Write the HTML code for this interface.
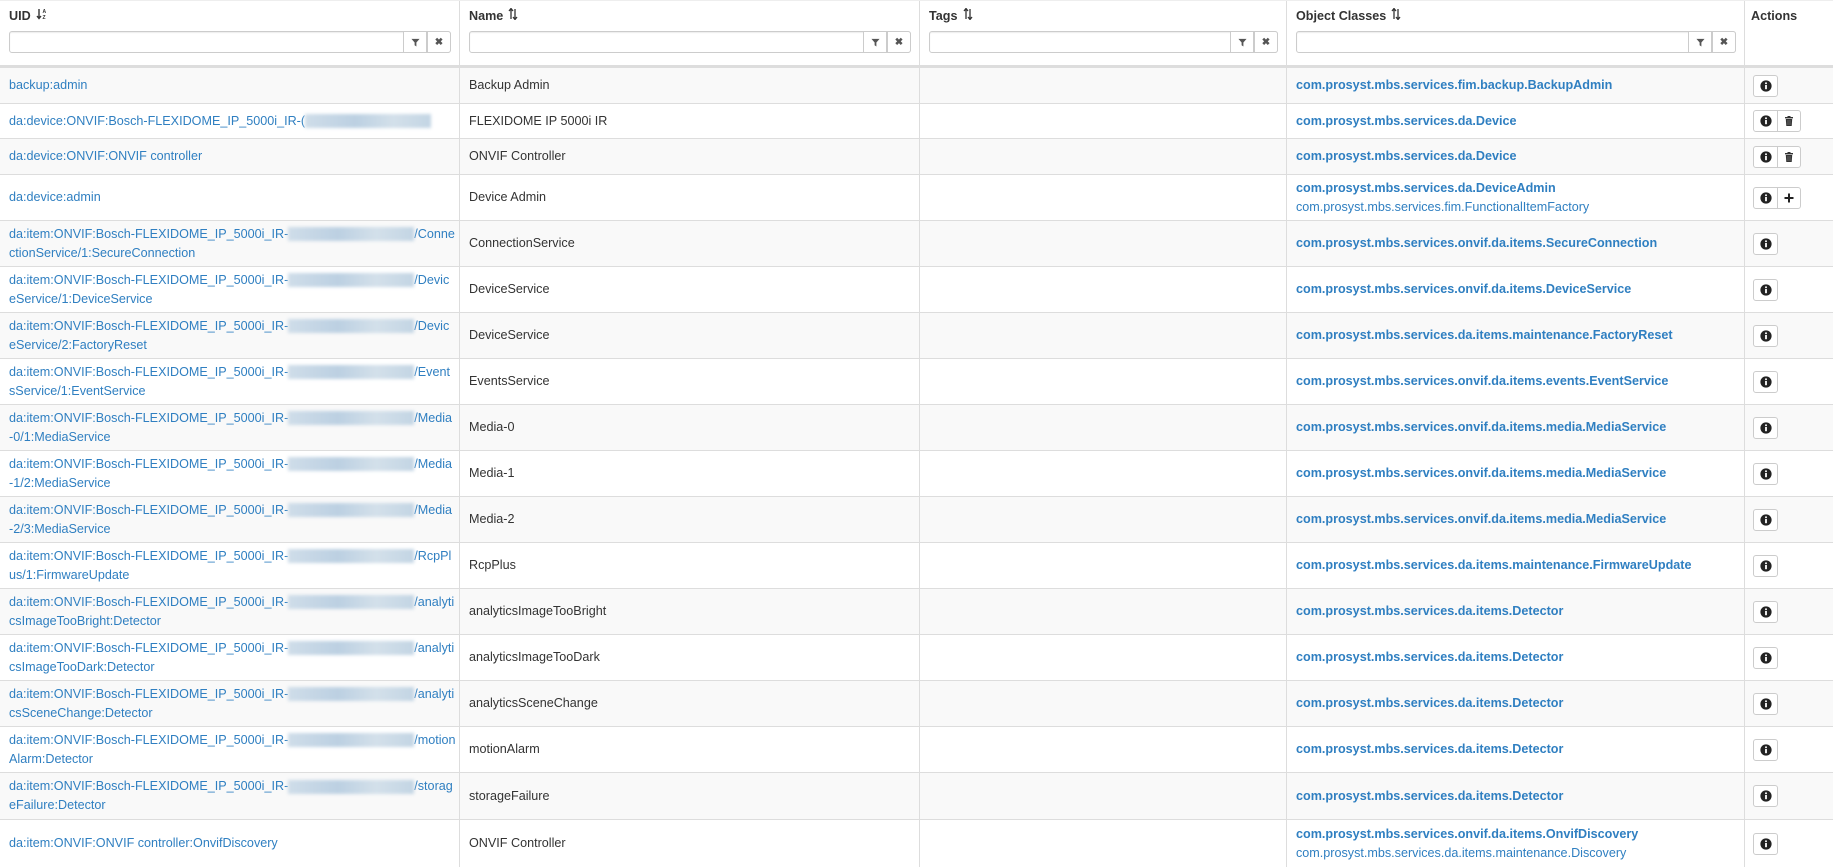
<!DOCTYPE html>
<html><head><meta charset="utf-8">
<style>
*{box-sizing:border-box;margin:0;padding:0}
body{width:1833px;height:864px;overflow:hidden;background:#fff;font-family:"Liberation Sans",Arial,sans-serif;font-size:12.6px;color:#333;position:relative}
.row{position:absolute;left:0;width:1833px;display:flex;border-top:1px solid #ddd}
.row.s{background:#f9f9f9}
.c{display:flex;align-items:center;padding:0 9px;border-right:1px solid #ddd;line-height:19px;overflow:hidden;white-space:nowrap}
.c1{width:460px}.c2{width:460px}.c3{width:367px}.c4{width:458px}.c5{width:88px;border-right:none;padding-left:8px}
a{color:#2f7fc1;text-decoration:none}
.b{font-weight:bold}
.blur{display:inline-block;width:126px;height:14px;vertical-align:middle;background:linear-gradient(90deg,#cfdde9,#bcd0e2 40%,#d3e0ea 70%,#c3d5e4);filter:blur(1.5px)}
.hdr{position:absolute;top:0;left:0;width:1833px;height:67px;display:flex;border-top:1px solid #eee;border-bottom:2px solid #ddd}
.hdr .c{align-items:flex-start;flex-direction:column;padding-top:6px;font-weight:bold;position:relative}
.inp{position:absolute;left:9px;right:8px;top:30px;height:22px;border:1px solid #ccc;border-radius:3px;background:#fff;box-shadow:inset 0 1px 1px rgba(0,0,0,.075)}
.ad{position:absolute;top:-1px;height:22px;width:24px;border:1px solid #ccc;background:#fff;display:flex;align-items:center;justify-content:center;font-size:10px;color:#555}
.btns{display:flex;border:1px solid #ccc;border-radius:3px;background:#fff;height:22px}
.btns span{width:23px;height:20px;display:flex;align-items:center;justify-content:center}
.btns span+span{border-left:1px solid #ccc}
</style></head><body>

<svg width="0" height="0" style="position:absolute">
<defs>
<symbol id="info" viewBox="0 0 12 12"><circle cx="6" cy="6" r="5.6" fill="#222"/><rect x="5.1" y="5" width="1.8" height="4.2" fill="#fff"/><circle cx="6" cy="3.3" r="1" fill="#fff"/></symbol>
<symbol id="trash" viewBox="0 0 12 12"><rect x="2" y="2" width="8" height="1.4" fill="#333"/><rect x="4.5" y="1" width="3" height="1.2" fill="#333"/><path d="M2.8 4h6.4l-.5 7H3.3z" fill="#333"/><path d="M5 5v5M7 5v5" stroke="#888" stroke-width=".6"/></symbol>
<symbol id="plus" viewBox="0 0 12 12"><path d="M6 1.5v9M1.5 6h9" stroke="#222" stroke-width="2"/></symbol>
<symbol id="fun" viewBox="0 0 10 10"><path d="M0.5 1h9L6 5v4.5L4 8V5z" fill="#555"/></symbol>
<symbol id="srt" viewBox="0 0 10 12"><path d="M3 11V1M1 3l2-2.5 2 2.5M7 1v10M5 9l2 2.5 2-2.5" stroke="#333" stroke-width="1.3" fill="none"/></symbol>
</defs></svg>

<div class="hdr">
 <div class="c c1">UID <svg width="12" height="12" viewBox="0 0 12 12" style="position:absolute;left:36px;top:7px"><path d="M3 1v9M1 8l2 2.5 2-2.5" stroke="#333" stroke-width="1.4" fill="none"/><text x="6.5" y="5" font-size="5" font-family="Liberation Sans" fill="#333">A</text><text x="6.5" y="11" font-size="5" font-family="Liberation Sans" fill="#333">Z</text></svg>
  <div class="inp"><div class="ad" style="right:23px"><svg width="9" height="9"><use href="#fun"/></svg></div><div class="ad" style="right:-1px;border-radius:0 3px 3px 0">&#10006;</div></div></div>
 <div class="c c2">Name <svg width="10" height="12" style="position:absolute;left:48px;top:7px"><use href="#srt"/></svg>
  <div class="inp"><div class="ad" style="right:23px"><svg width="9" height="9"><use href="#fun"/></svg></div><div class="ad" style="right:-1px;border-radius:0 3px 3px 0">&#10006;</div></div></div>
 <div class="c c3">Tags <svg width="10" height="12" style="position:absolute;left:43px;top:7px"><use href="#srt"/></svg>
  <div class="inp"><div class="ad" style="right:23px"><svg width="9" height="9"><use href="#fun"/></svg></div><div class="ad" style="right:-1px;border-radius:0 3px 3px 0">&#10006;</div></div></div>
 <div class="c c4">Object Classes <svg width="10" height="12" style="position:absolute;left:104px;top:7px"><use href="#srt"/></svg>
  <div class="inp"><div class="ad" style="right:23px"><svg width="9" height="9"><use href="#fun"/></svg></div><div class="ad" style="right:-1px;border-radius:0 3px 3px 0">&#10006;</div></div></div>
 <div class="c c5" style="padding-left:6px">Actions</div>
</div>

<div class="row s" style="top:67px;height:36px"><div class="c c1"><a>backup:admin</a></div><div class="c c2">Backup Admin</div><div class="c c3"></div><div class="c c4"><a class="b">com.prosyst.mbs.services.fim.backup.BackupAdmin</a></div><div class="c c5"><div class="btns"><span><svg width="12" height="12"><use href="#info"/></svg></span></div></div></div>

<div class="row" style="top:103px;height:35px"><div class="c c1"><a>da:device:ONVIF:Bosch-FLEXIDOME_IP_5000i_IR-(<span class="blur"></span></a></div><div class="c c2">FLEXIDOME IP 5000i IR</div><div class="c c3"></div><div class="c c4"><a class="b">com.prosyst.mbs.services.da.Device</a></div><div class="c c5"><div class="btns"><span><svg width="12" height="12"><use href="#info"/></svg></span><span><svg width="12" height="12"><use href="#trash"/></svg></span></div></div></div>

<div class="row s" style="top:138px;height:36px"><div class="c c1"><a>da:device:ONVIF:ONVIF controller</a></div><div class="c c2">ONVIF Controller</div><div class="c c3"></div><div class="c c4"><a class="b">com.prosyst.mbs.services.da.Device</a></div><div class="c c5"><div class="btns"><span><svg width="12" height="12"><use href="#info"/></svg></span><span><svg width="12" height="12"><use href="#trash"/></svg></span></div></div></div>

<div class="row" style="top:174px;height:46px"><div class="c c1"><a>da:device:admin</a></div><div class="c c2">Device Admin</div><div class="c c3"></div><div class="c c4"><div><a class="b">com.prosyst.mbs.services.da.DeviceAdmin</a><br><a>com.prosyst.mbs.services.fim.FunctionalItemFactory</a></div></div><div class="c c5"><div class="btns"><span><svg width="12" height="12"><use href="#info"/></svg></span><span><svg width="12" height="12"><use href="#plus"/></svg></span></div></div></div>

<div class="row s" style="top:220px;height:46px"><div class="c c1"><a>da:item:ONVIF:Bosch-FLEXIDOME_IP_5000i_IR-<span class="blur"></span>/Conne<br>ctionService/1:SecureConnection</a></div><div class="c c2">ConnectionService</div><div class="c c3"></div><div class="c c4"><a class="b">com.prosyst.mbs.services.onvif.da.items.SecureConnection</a></div><div class="c c5"><div class="btns"><span><svg width="12" height="12"><use href="#info"/></svg></span></div></div></div>

<div class="row" style="top:266px;height:46px"><div class="c c1"><a>da:item:ONVIF:Bosch-FLEXIDOME_IP_5000i_IR-<span class="blur"></span>/Devic<br>eService/1:DeviceService</a></div><div class="c c2">DeviceService</div><div class="c c3"></div><div class="c c4"><a class="b">com.prosyst.mbs.services.onvif.da.items.DeviceService</a></div><div class="c c5"><div class="btns"><span><svg width="12" height="12"><use href="#info"/></svg></span></div></div></div>

<div class="row s" style="top:312px;height:46px"><div class="c c1"><a>da:item:ONVIF:Bosch-FLEXIDOME_IP_5000i_IR-<span class="blur"></span>/Devic<br>eService/2:FactoryReset</a></div><div class="c c2">DeviceService</div><div class="c c3"></div><div class="c c4"><a class="b">com.prosyst.mbs.services.da.items.maintenance.FactoryReset</a></div><div class="c c5"><div class="btns"><span><svg width="12" height="12"><use href="#info"/></svg></span></div></div></div>

<div class="row" style="top:358px;height:46px"><div class="c c1"><a>da:item:ONVIF:Bosch-FLEXIDOME_IP_5000i_IR-<span class="blur"></span>/Event<br>sService/1:EventService</a></div><div class="c c2">EventsService</div><div class="c c3"></div><div class="c c4"><a class="b">com.prosyst.mbs.services.onvif.da.items.events.EventService</a></div><div class="c c5"><div class="btns"><span><svg width="12" height="12"><use href="#info"/></svg></span></div></div></div>

<div class="row s" style="top:404px;height:46px"><div class="c c1"><a>da:item:ONVIF:Bosch-FLEXIDOME_IP_5000i_IR-<span class="blur"></span>/Media<br>-0/1:MediaService</a></div><div class="c c2">Media-0</div><div class="c c3"></div><div class="c c4"><a class="b">com.prosyst.mbs.services.onvif.da.items.media.MediaService</a></div><div class="c c5"><div class="btns"><span><svg width="12" height="12"><use href="#info"/></svg></span></div></div></div>

<div class="row" style="top:450px;height:46px"><div class="c c1"><a>da:item:ONVIF:Bosch-FLEXIDOME_IP_5000i_IR-<span class="blur"></span>/Media<br>-1/2:MediaService</a></div><div class="c c2">Media-1</div><div class="c c3"></div><div class="c c4"><a class="b">com.prosyst.mbs.services.onvif.da.items.media.MediaService</a></div><div class="c c5"><div class="btns"><span><svg width="12" height="12"><use href="#info"/></svg></span></div></div></div>

<div class="row s" style="top:496px;height:46px"><div class="c c1"><a>da:item:ONVIF:Bosch-FLEXIDOME_IP_5000i_IR-<span class="blur"></span>/Media<br>-2/3:MediaService</a></div><div class="c c2">Media-2</div><div class="c c3"></div><div class="c c4"><a class="b">com.prosyst.mbs.services.onvif.da.items.media.MediaService</a></div><div class="c c5"><div class="btns"><span><svg width="12" height="12"><use href="#info"/></svg></span></div></div></div>

<div class="row" style="top:542px;height:46px"><div class="c c1"><a>da:item:ONVIF:Bosch-FLEXIDOME_IP_5000i_IR-<span class="blur"></span>/RcpPl<br>us/1:FirmwareUpdate</a></div><div class="c c2">RcpPlus</div><div class="c c3"></div><div class="c c4"><a class="b">com.prosyst.mbs.services.da.items.maintenance.FirmwareUpdate</a></div><div class="c c5"><div class="btns"><span><svg width="12" height="12"><use href="#info"/></svg></span></div></div></div>

<div class="row s" style="top:588px;height:46px"><div class="c c1"><a>da:item:ONVIF:Bosch-FLEXIDOME_IP_5000i_IR-<span class="blur"></span>/analyti<br>csImageTooBright:Detector</a></div><div class="c c2">analyticsImageTooBright</div><div class="c c3"></div><div class="c c4"><a class="b">com.prosyst.mbs.services.da.items.Detector</a></div><div class="c c5"><div class="btns"><span><svg width="12" height="12"><use href="#info"/></svg></span></div></div></div>

<div class="row" style="top:634px;height:46px"><div class="c c1"><a>da:item:ONVIF:Bosch-FLEXIDOME_IP_5000i_IR-<span class="blur"></span>/analyti<br>csImageTooDark:Detector</a></div><div class="c c2">analyticsImageTooDark</div><div class="c c3"></div><div class="c c4"><a class="b">com.prosyst.mbs.services.da.items.Detector</a></div><div class="c c5"><div class="btns"><span><svg width="12" height="12"><use href="#info"/></svg></span></div></div></div>

<div class="row s" style="top:680px;height:46px"><div class="c c1"><a>da:item:ONVIF:Bosch-FLEXIDOME_IP_5000i_IR-<span class="blur"></span>/analyti<br>csSceneChange:Detector</a></div><div class="c c2">analyticsSceneChange</div><div class="c c3"></div><div class="c c4"><a class="b">com.prosyst.mbs.services.da.items.Detector</a></div><div class="c c5"><div class="btns"><span><svg width="12" height="12"><use href="#info"/></svg></span></div></div></div>

<div class="row" style="top:726px;height:46px"><div class="c c1"><a>da:item:ONVIF:Bosch-FLEXIDOME_IP_5000i_IR-<span class="blur"></span>/motion<br>Alarm:Detector</a></div><div class="c c2">motionAlarm</div><div class="c c3"></div><div class="c c4"><a class="b">com.prosyst.mbs.services.da.items.Detector</a></div><div class="c c5"><div class="btns"><span><svg width="12" height="12"><use href="#info"/></svg></span></div></div></div>

<div class="row s" style="top:772px;height:47px"><div class="c c1"><a>da:item:ONVIF:Bosch-FLEXIDOME_IP_5000i_IR-<span class="blur"></span>/storag<br>eFailure:Detector</a></div><div class="c c2">storageFailure</div><div class="c c3"></div><div class="c c4"><a class="b">com.prosyst.mbs.services.da.items.Detector</a></div><div class="c c5"><div class="btns"><span><svg width="12" height="12"><use href="#info"/></svg></span></div></div></div>

<div class="row" style="top:819px;height:48px"><div class="c c1"><a>da:item:ONVIF:ONVIF controller:OnvifDiscovery</a></div><div class="c c2">ONVIF Controller</div><div class="c c3"></div><div class="c c4"><div><a class="b">com.prosyst.mbs.services.onvif.da.items.OnvifDiscovery</a><br><a>com.prosyst.mbs.services.da.items.maintenance.Discovery</a></div></div><div class="c c5"><div class="btns"><span><svg width="12" height="12"><use href="#info"/></svg></span></div></div></div>

</body></html>
